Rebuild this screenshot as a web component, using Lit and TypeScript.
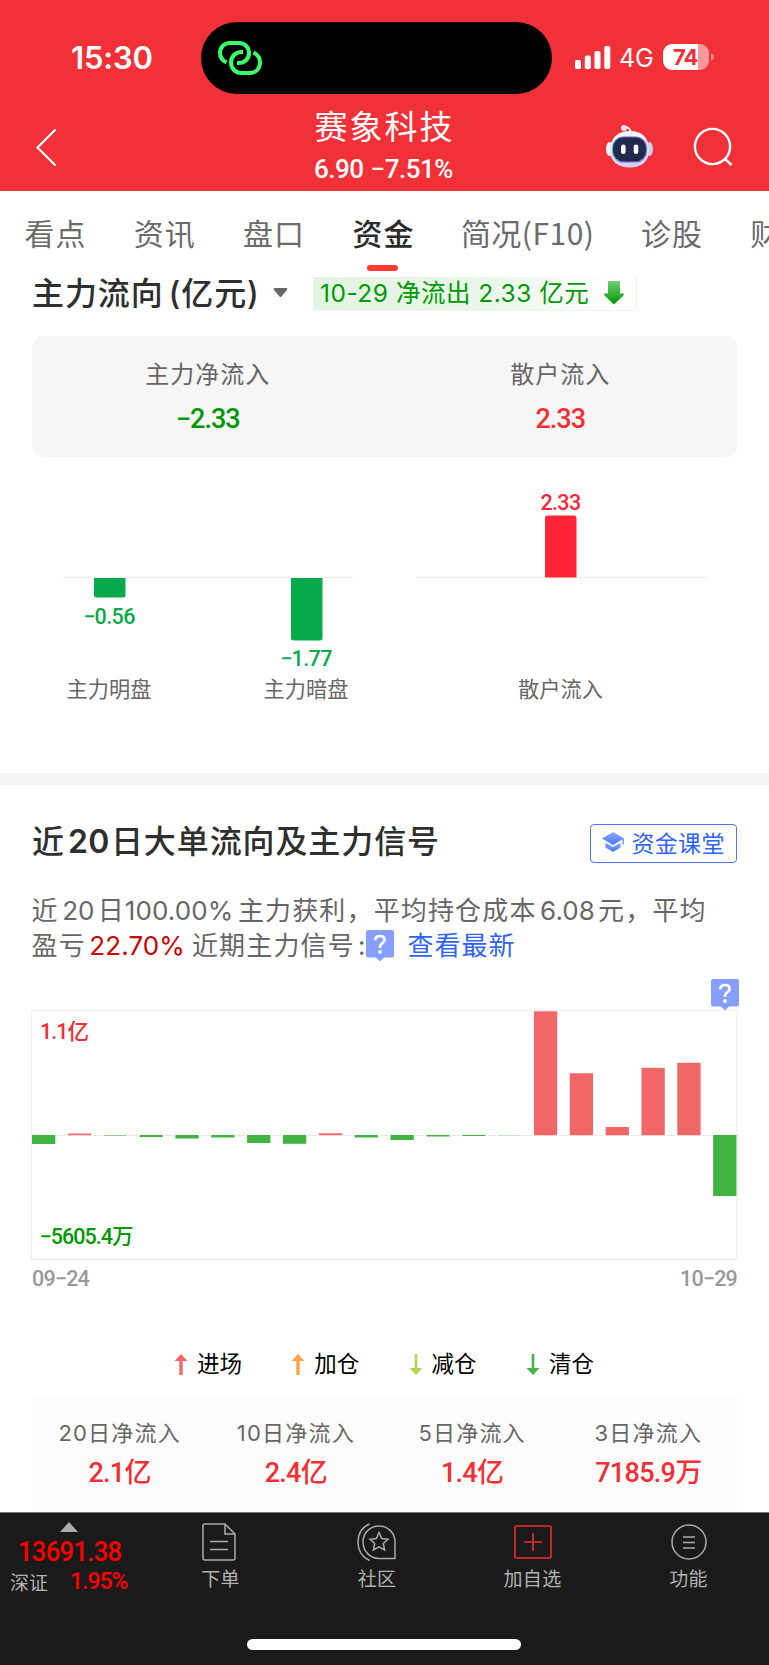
import { LitElement, html, css, svg } from "lit";
import { customElement } from "lit/decorators.js";

const FLOW = [-9, 1.7, -0.6, -2, -3.5, -2.5, -8, -8.8, 2, -2.5, -5, -1.5, -1, -0.3, 124, 62, 8.3, 67.5, 72.5, -61];

const LEGEND = [
  { name: "进场", color: "#f0686a", up: true },
  { name: "加仓", color: "#ffa04d", up: true },
  { name: "减仓", color: "#b0d84b", up: false },
  { name: "清仓", color: "#45b545", up: false },
];

const STATS = [
  ["20日净流入", "2.1", "亿"],
  ["10日净流入", "2.4", "亿"],
  ["5日净流入", "1.4", "亿"],
  ["3日净流入", "7185.9", "万"],
];

const helpIcon = html`<svg class="help" width="28" height="32" viewBox="0 0 28 32">
  <path d="M2 0H26Q28 0 28 2V25.500Q28 27.500 26 27.500H18L14 31.500L10 27.500H2Q0 27.500 0 25.500V2Q0 0 2 0Z" fill="#869fff" />
  <path d="M9.300 10.200C9.300 7.600 11.200 6 14 6C16.800 6 18.600 7.600 18.600 9.900C18.600 12.900 14 13.400 14 17.200V18" fill="none" stroke="#fff" stroke-width="2.700" />
  <circle cx="14" cy="22" r="1.900" fill="#fff" />
</svg>`;

@customElement("app-root")
export class AppRoot extends LitElement {
  static styles = css`
    :host { display: block; width: 769px; height: 1665px; overflow: hidden; background: #fff; color: #666;
      font-family: Inter, "Noto Sans CJK SC", sans-serif; }
    * { box-sizing: border-box; }
    svg { display: block; flex: none; }
    .cjk { font-family: "Noto Sans CJK SC", sans-serif; }
    .num { font-family: Roboto, "Noto Sans CJK SC", sans-serif; font-weight: 500; }
    .page { display: flex; flex-direction: column; height: 1665px; white-space: nowrap; }
    header { height: 191px; background: #f23037; color: #fff; display: flex; flex-direction: column; }
    .status { display: flex; height: 94px; padding-top: 22px; align-items: flex-start; }
    .status > * { flex: none; }
    .time { width: 201px; padding-left: 71px; font-size: 31px; line-height: 72px; font-weight: 600; letter-spacing: -0.2px; }
    .island { width: 351px; height: 72px; border-radius: 36px; background: #000; padding: 18px 0 0 16px; }
    .signal { margin: 24px 0 0 23px; }
    .net { width: 52px; padding-left: 8px; font-size: 25px; line-height: 73px; letter-spacing: -0.2px; }
    .battery { margin-top: 22px; width: 46px; height: 26px; border-radius: 9px; background: linear-gradient(90deg, #fff 35px, #fa979b 35px);
      color: #f23037; font-size: 22px; font-weight: 700; line-height: 26px; padding-left: 10px; letter-spacing: -1px; }
    .cap { margin: 31px 0 0 2px; }
    .nav { display: flex; height: 97px; }
    .nav > * { flex: none; }
    .back { margin: 33px 0 0 34px; }
    .stock { width: 200px; margin-left: 225px; display: flex; flex-direction: column; align-items: center; }
    .name { font-size: 33px; letter-spacing: 2px; line-height: 40px; margin-top: 11px; padding-left: 3px; }
    .quote { font-size: 26px; line-height: 30px; margin-top: 9px; letter-spacing: -0.5px; word-spacing: 1px; padding-left: 1px; }
    .robot { margin: 30px 0 0 121.500px; }
    .search { margin: 32px 0 0 37px; }
    .tabs { display: flex; height: 86px; padding: 19px 0 0 24.500px; gap: 47.300px; overflow: hidden; font-size: 30px; line-height: 44px; color: #6b6b6b; letter-spacing: 1px; }
    .tab { flex: none; display: flex; flex-direction: column; align-items: center; }
    .f10 { letter-spacing: 0.5px; width: 132px; }
    .active { color: #2c2c2c; font-weight: 500; }
    .line { width: 31px; height: 6px; border-radius: 3px; background: #ff3a30; margin: 11px 2px 0 0; }
    .flowhead { display: flex; height: 59px; padding-left: 32px; }
    h2 { margin: 0; color: #2f2f2f; font-weight: 500; font-size: 32px; letter-spacing: 0.9px; line-height: 34px; }
    .flowhead h2 { width: 241px; }
    .unit { margin-left: 5px; }
    .caret { margin-top: 11px; }
    .tag { margin-left: 25px; width: 324px; height: 34px; border-radius: 0 0 4px 4px; padding-left: 7px; display: flex; font-size: 24.500px; line-height: 32px; color: #009a00;
      letter-spacing: 0.5px; background: linear-gradient(90deg, #e4f4e4, #e9f6e9 50%, #fff 96%); border-right: 1px solid #e6f4e6; border-bottom: 1px solid #edf7ed; }
    .tag span { width: 284px; }
    .tag svg { margin-top: 4px; }
    .card { height: 121px; margin: 0 32px; border-radius: 11px; background: #f6f6f6; display: flex; }
    .cell { flex: 1; text-align: center; font-size: 24px; letter-spacing: 1px; line-height: 36px; padding: 21px 1px 0 0; }
    .cell .num { font-size: 27px; letter-spacing: -1px; line-height: 36px; margin-top: 8px; }
    .green { color: #009a00; } .red { color: #f22f34; }
    .split { height: 12px; background: #f4f4f4; flex: none; }
    .sechead { display: flex; justify-content: space-between; padding: 39px 32px 0; height: 104px; }
    .sechead h2 { line-height: 35px; letter-spacing: 0.9px; }
    .sechead h2 span { margin: 0 1px 0 3px; letter-spacing: 0.5px; font-weight: 600; }
    .lesson { width: 147px; height: 39px; border: 1.500px solid #4a78ff; border-radius: 4px; color: #2e63ff; font-size: 23px; letter-spacing: 0.3px; display: flex; align-items: center; padding: 0 0 2px 11px; gap: 7.500px; }
    .para { margin: 0; padding: 4px 0 0 31.500px; height: 91px; font-size: 26px; line-height: 35px; letter-spacing: 1.150px; }
    .row { display: flex; }
    .row .help { margin: 2px 13px 0 1px; }
    .n { letter-spacing: 0.1px; margin: 0 3px 0 3.500px; }
    .tight { margin: 0 4.500px 0 0; }
    .loss { color: #cf0000; margin-right: 0; }
    .gap { margin: 0; word-spacing: -1.500px; }
    .colon { margin: 0 0 0 3px; letter-spacing: 0; }
    .blue { color: #2e63ff; letter-spacing: 1px; }
    .toolrow { display: flex; justify-content: flex-end; padding-right: 30px; height: 31px; }
    .history { height: 250px; }
    .dates { display: flex; justify-content: space-between; padding: 4px 32px 0; height: 86px; color: #999; font-size: 21.500px; line-height: 30px; }
    .dates .num { font-weight: 500; letter-spacing: -0.8px; }
    .legend { display: flex; padding: 2px 0 0 174px; height: 50px; color: #000; font-size: 22.500px; line-height: 29px; }
    .legend div { width: 117.300px; display: flex; gap: 9px; }
    .legend svg { margin-top: 5.500px; }
    .stats { margin: 0 32px; height: 116px; background: #fcfcfc; display: flex; padding-top: 20px; }
    .stat { flex: 1; text-align: center; font-size: 22px; line-height: 35px; letter-spacing: 1.200px; padding-right: 1px; }
    .stat .num { font-size: 27px; line-height: 38px; letter-spacing: -0.700px; margin-top: 3px; }
    footer { height: 153px; background: #1a1a1a; border-top: 1px solid #777; display: flex; flex-direction: column; color: #b2b2b2; font-size: 19px; }
    .menu { display: flex; height: 126px; }
    .menu > * { flex: none; }
    .index { width: 135px; padding: 9px 0 0 10px; display: flex; flex-direction: column; }
    .up { margin-left: 50px; }
    .points { color: #f00; font-size: 28px; line-height: 32px; margin: 4px 0 0 8px; letter-spacing: -0.7px; width: 110px; transform: scaleX(0.91); transform-origin: 0 0; }
    .change { display: flex; line-height: 24px; margin-top: 2px; }
    .change .num { color: #f00; font-size: 23px; margin-left: 22px; letter-spacing: -1px; }
    .item { display: flex; flex-direction: column; align-items: center; padding-top: 10px; letter-spacing: 0.300px; }
    .item span { line-height: 28px; margin-top: 5px; }
    .i1 { width: 170px; padding-left: 1px; } .i2 { width: 144px; } .i3 { width: 167px; } .i4 { width: 145px; }
    .i1 svg { margin-left: -3px; }
    .home { width: 274px; height: 11px; border-radius: 6px; background: #fff; margin-left: 247px; }
  `;

  render() {
    return html`<div class="page">
      <header>
        <div class="status">
          <div class="time">15:30</div>
          <div class="island">
            <svg width="46" height="36" viewBox="0 0 46 36" fill="none" stroke="#39ff6a" stroke-width="4">
              <path d="M9.500 22.500C5.500 20.500 3 17 3 13C3 7.500 7 3 13 3H21.500C27.500 3 32 7 32 13C32 19 27.500 23 21.500 23H20" />
              <path d="M26 12H24.500C18.500 12 14 16.500 14 22.500C14 28.500 18.500 33 24.500 33H33C39 33 43 28.500 43 22.500C43 18 40.500 14.500 36.500 12.500" />
            </svg>
          </div>
          <svg class="signal" width="36" height="24" fill="#fff">
            <rect x="0" y="14" width="6" height="9" rx="1.800" /><rect x="9.800" y="9.500" width="6" height="13.500" rx="1.800" />
            <rect x="19.500" y="5" width="6" height="18" rx="1.800" /><rect x="29.300" y="0" width="6" height="23" rx="1.800" />
          </svg>
          <div class="net">4G</div>
          <div class="battery">74</div>
          <svg class="cap" width="3" height="8"><path d="M0 0Q3 1.500 3 4Q3 6.500 0 8Z" fill="#fa878c" /></svg>
        </div>
        <div class="nav">
          <svg class="back" width="24" height="40"><path d="M21.500 2.500L3.500 20.500L21.500 38.500" fill="none" stroke="#fff" stroke-width="2.200" /></svg>
          <div class="stock">
            <div class="name cjk">赛象科技</div>
            <div class="quote num">6.90 −7.51%</div>
          </div>
          <svg class="robot" width="50" height="46" viewBox="0 0 50 46">
            <defs>
              <linearGradient id="shell" x2="0" y2="1"><stop stop-color="#fff" /><stop offset="1" stop-color="#cfd0ef" /></linearGradient>
              <linearGradient id="rim"><stop stop-color="#6ac0e8" /><stop offset=".4" stop-color="#7747c9" /><stop offset="1" stop-color="#8790f0" /></linearGradient>
            </defs>
            <path d="M18 3.500C23 2.500 26 5 26 9" fill="none" stroke="#fff" stroke-width="1.800" />
            <circle cx="19" cy="4" r="3" fill="#e4e5f5" />
            <ellipse cx="4.500" cy="25" rx="3.500" ry="7" fill="#f3f3ff" /><ellipse cx="44.500" cy="25" rx="3.500" ry="7" fill="#c9caef" />
            <path d="M25 7C37 7 44 14 44 26C44 37 37 43.500 25 43.500C12 43.500 5 37 5 26C5 14 13 7 25 7Z" fill="url(#shell)" />
            <rect x="6.800" y="12.500" width="35.500" height="26" rx="11.500" fill="url(#rim)" />
            <rect x="8" y="13.500" width="33.100" height="23.800" rx="10.500" fill="#222a4c" />
            <rect x="16" y="20.500" width="4.600" height="9.500" rx="2.300" fill="#fff" /><rect x="28.700" y="20.500" width="4.600" height="9.500" rx="2.300" fill="#fff" />
          </svg>
          <svg class="search" width="42" height="42" fill="none" stroke="#fff" stroke-width="2.400"><circle cx="20.500" cy="20.500" r="17.600" /><path d="M32.500 32.500L39.500 39" /></svg>
        </div>
      </header>
      <div class="tabs cjk">
        <div class="tab">看点</div><div class="tab">资讯</div><div class="tab">盘口</div>
        <div class="tab active">资金<div class="line"></div></div>
        <div class="tab f10">简况(F10)</div><div class="tab">诊股</div><div class="tab">财务</div>
      </div>
      <div class="flowhead">
        <h2>主力流向<span class="unit">(亿元)</span></h2>
        <svg class="caret" width="15" height="10"><path d="M1.500 0H13.500Q15 .5 14 2L8.500 8.500Q7.500 9.500 6.500 8.500L1 2Q0 .5 1.500 0Z" fill="#666" /></svg>
        <div class="tag"><span>10-29 净流出 2.33 亿元</span>
          <svg width="20" height="24"><defs><linearGradient id="fall" x2="0" y2="1"><stop stop-color="#72cf72" /><stop offset="1" stop-color="#009a00" /></linearGradient></defs>
          <path d="M5 0H15Q16 0 16 1V12.500H20Q20 14 19 15L10 23.500L1 15Q0 14 0 12.500H4V1Q4 0 5 0Z" fill="url(#fall)" /></svg>
        </div>
      </div>
      <div class="card">
        <div class="cell">主力净流入<div class="num green">−2.33</div></div>
        <div class="cell">散户流入<div class="num red">2.33</div></div>
      </div>
      <svg class="flow" width="769" height="316" viewBox="0 457 769 316" text-anchor="middle">
        <path d="M63 577.500H353M416 577.500H706" stroke="#eee" stroke-width="1.500" />
        <path d="M94 578H125.500V595Q125.500 597.500 123 597.500H96.500Q94 597.500 94 595Z" fill="#08ab4b" />
        <path d="M291 578H322.500V638Q322.500 640.500 320 640.500H293.500Q291 640.500 291 638Z" fill="#08ab4b" />
        <path d="M545 577.500V518Q545 515.500 547.500 515.500H574Q576.500 515.500 576.500 518V577.500Z" fill="#ff2436" />
        <g class="num" font-size="21.500" letter-spacing="-.6">
          <text x="109" y="623.500" fill="#08ab4b">−0.56</text>
          <text x="306" y="666" fill="#08ab4b">−1.77</text>
          <text x="560.500" y="509.500" fill="#ff2436">2.33</text>
        </g>
        <g class="cjk" font-size="21.200" fill="#666">
          <text x="109" y="697">主力明盘</text><text x="306" y="697">主力暗盘</text><text x="560.500" y="697">散户流入</text>
        </g>
      </svg>
      <div class="split"></div>
      <div class="sechead">
        <h2>近<span>20</span>日大单流向及主力信号</h2>
        <div class="lesson"><svg width="22" height="20"><defs><linearGradient id="hat" x2="0" y2="1"><stop stop-color="#8eaaff" /><stop offset="1" stop-color="#4476ff" /></linearGradient></defs>
          <g fill="url(#hat)"><path d="M11 0L22 6.500L11 13L0 6.500Z" /><path d="M3.500 10.500L11 15L18.500 10.500V15.500L11 20L3.500 15.500Z" /></g><path d="M21.200 6.500V12.500" stroke="#6e91ff" stroke-width="1.400" /></svg>资金课堂</div>
      </div>
      <div class="para">
        <div class="row"><span>近<span class="n">20</span>日<span class="n tight">100.00%</span>主力获利，平均持仓成本<span class="n">6.08</span>元，平均</span></div>
        <div class="row"><span class="gap">盈亏<span class="n loss">22.70%</span> 近期主力信号<span class="colon">:</span></span>${helpIcon}<span class="blue">查看最新</span></div>
      </div>
      <div class="toolrow">${helpIcon}</div>
      <svg class="history" width="769" height="250" viewBox="0 1010 769 250">
        <rect x="31.500" y="1010.500" width="705.500" height="249" fill="none" stroke="#eee" stroke-width="1.200" />
        ${FLOW.map((v, i) => {
          const x = 32 + i * 35.85;
          return svg`<rect x=${x} y=${v > 0 ? 1135.3 - v : 1135} width="23.300" height=${Math.abs(v)} fill=${v > 0 ? "#f16667" : "#41b341"} />
            ${i < 19 ? svg`<rect x=${x + 25} y="1135" width="9" height="0.700" fill="#ddd" />` : ""}`;
        })}
        <g class="num" font-size="21.500" letter-spacing="-.95">
          <text x="40" y="1039" fill="#f22f34">1.1亿</text>
          <text x="39.500" y="1244" fill="#009a00">−5605.4万</text>
        </g>
      </svg>
      <div class="dates"><span class="num">09−24</span><span class="num">10−29</span></div>
      <div class="legend cjk">
        ${LEGEND.map((l) => html`<div><svg width="14" height="21" viewBox="0 0 14 21"><path d=${l.up ? "M7 0L13.500 7H8.700V21H5.300V7H.5Z" : "M7 21L13.500 14H8.300V0H5.700V14H.5Z"} fill=${l.color} /></svg>${l.name}</div>`)}
      </div>
      <div class="stats">
        ${STATS.map(([label, n, unit]) => html`<div class="stat">${label}<div class="num red">${n}${unit}</div></div>`)}
      </div>
      <footer>
        <div class="menu">
          <div class="index">
            <svg class="up" width="18" height="10"><path d="M9 0L18 10H0Z" fill="#aaa" /></svg>
            <div class="points num">13691.38</div>
            <div class="change"><span class="cjk">深证</span><span class="num">1.95%</span></div>
          </div>
          <div class="item i1"><svg width="34" height="38" viewBox="0 0 34 38" fill="none" stroke="#aaa" stroke-width="1.500"><path d="M2.500 1H23L33 11V35Q33 37 31 37H3Q1 37 1 35V2.500Q1 1 2.500 1ZM23 1V11H33" /><path d="M8 18.500H26M8 26.500H26" /></svg><span>下单</span></div>
          <div class="item i2"><svg width="40" height="38" viewBox="0 0 40 38" fill="none" stroke="#aaa" stroke-width="1.500"><path d="M22 3C31 3 38 10 38 19V35.500H22C13 35.500 6 28 6 19S13 3 22 3Z" /><path d="M12.500 1C5 4 1 11 1 19S5 34 12.500 37.500" /><path d="M22 9.500L24.700 15.500L31 16.200L26.300 20.500L27.600 27L22 23.800L16.400 27L17.700 20.500L13 16.200L19.300 15.500Z" /></svg><span>社区</span></div>
          <div class="item i3"><svg width="38" height="38" viewBox="0 0 38 38" fill="none" stroke="#ee2c2c" stroke-width="1.600"><rect x="1" y="3" width="36" height="32" rx="1" /><path d="M19 10V28M10 19H28" /></svg><span>加自选</span></div>
          <div class="item i4"><svg width="36" height="38" viewBox="0 0 36 38" fill="none" stroke="#aaa" stroke-width="1.500"><circle cx="18" cy="19" r="17" /><path d="M12 14H24M12 19.500H24M12 25H24" /></svg><span>功能</span></div>
        </div>
        <div class="home"></div>
      </footer>
    </div>`;
  }
}
